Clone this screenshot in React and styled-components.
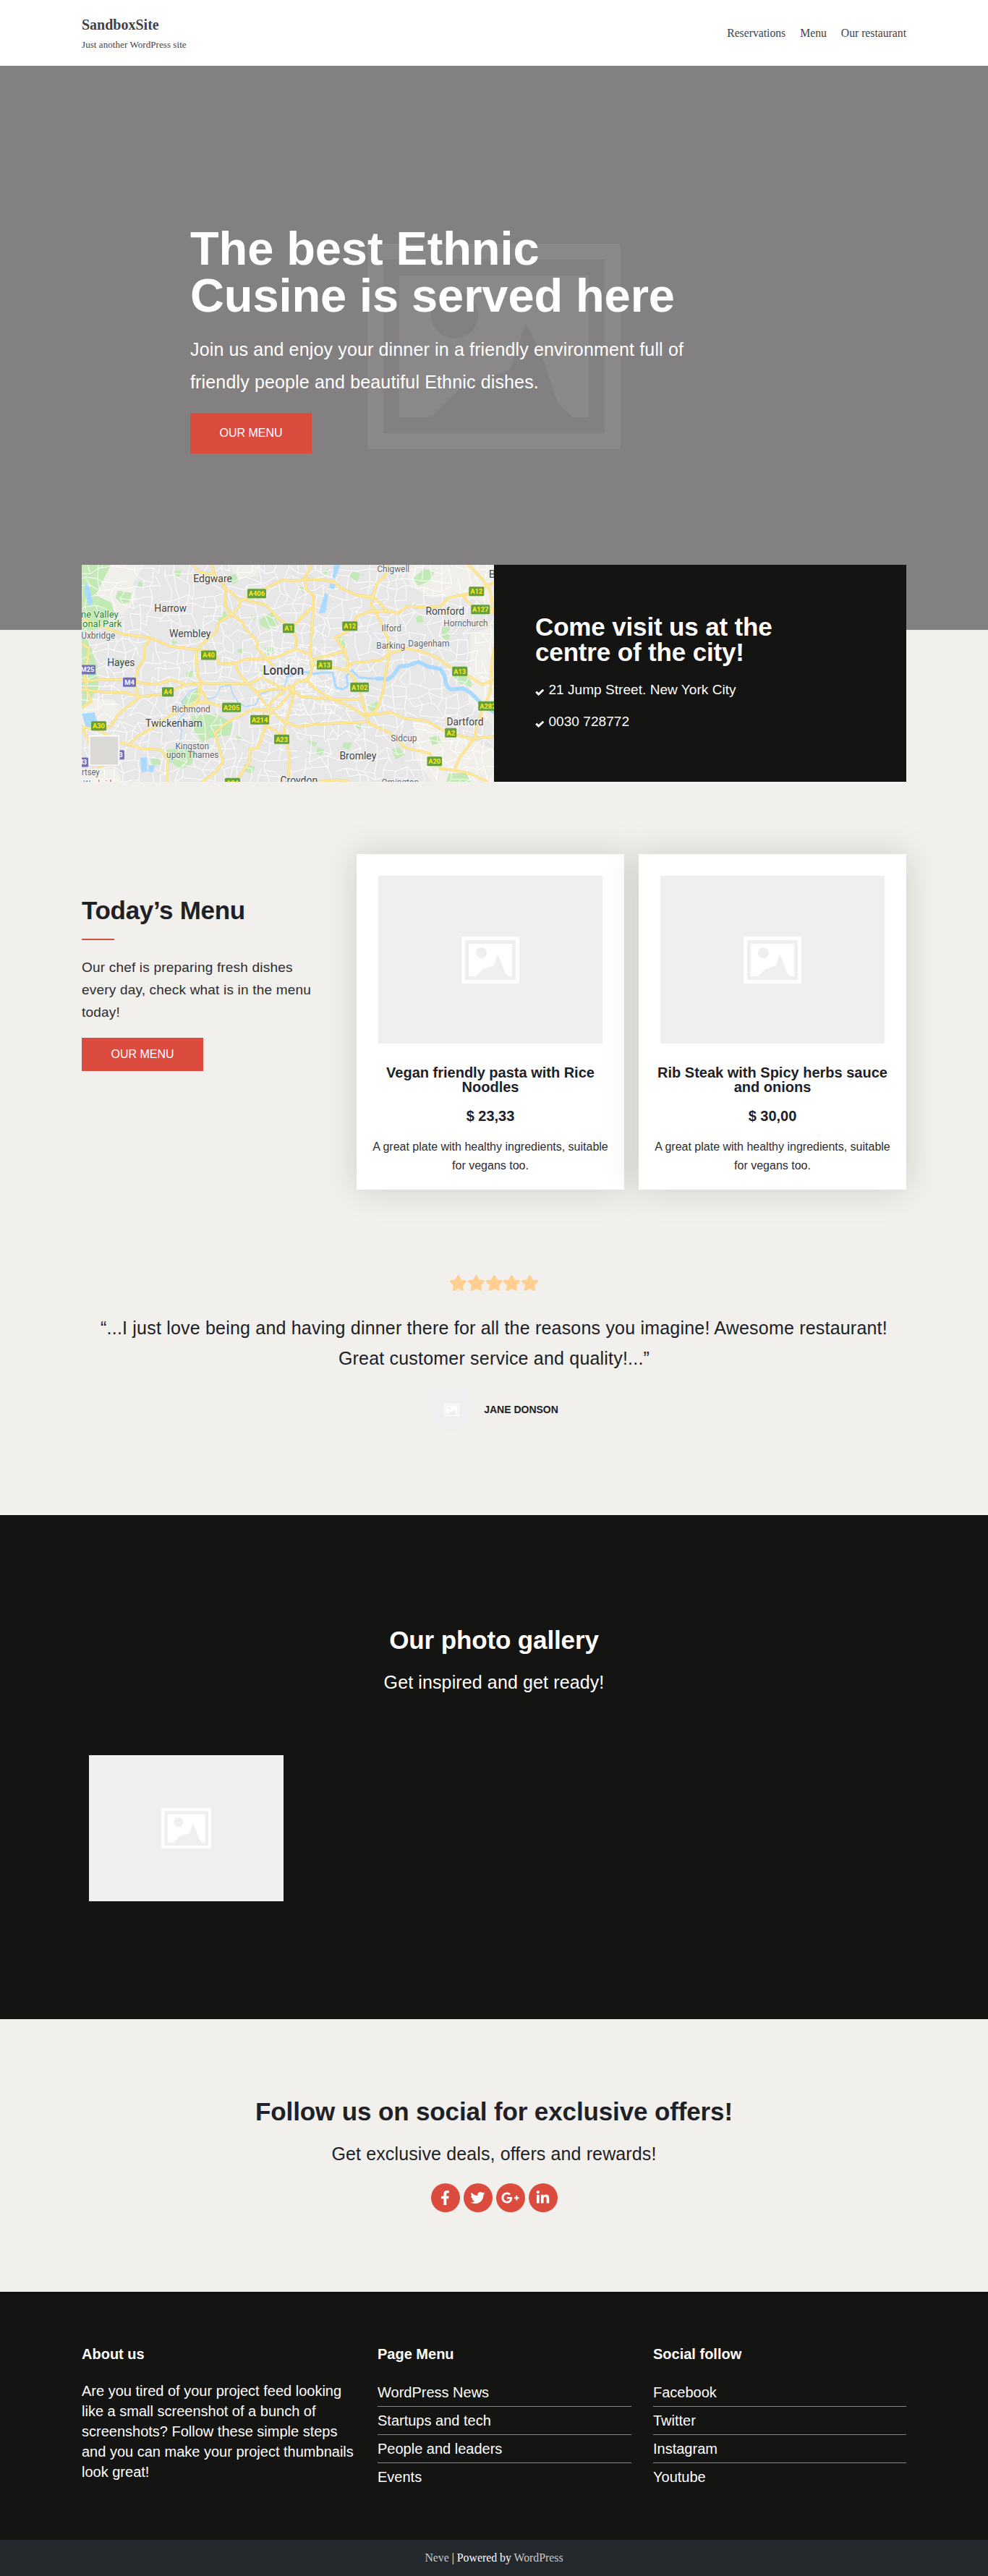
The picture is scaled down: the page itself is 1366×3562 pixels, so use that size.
import React from "react";
import styled, { createGlobalStyle } from "styled-components";
import {
  FaStar,
  FaFacebookF,
  FaTwitter,
  FaGooglePlusG,
  FaLinkedinIn,
} from "react-icons/fa";

const sans = `"Liberation Sans", Arial, sans-serif`;
const serif = `"Liberation Serif", "Times New Roman", serif`;
const c = {
  cream: "#f1f0ec",
  dark: "#141412",
  ink: "#202127",
  red: "#db4c3f",
  grey: "#f0eeef",
};

const Global = createGlobalStyle`
  *, *::before, *::after { box-sizing: border-box; }
  body { margin: 0; background: ${c.cream}; color: ${c.ink}; font-family: ${sans}; }
  h1, h2, h3, p, ul { margin: 0; padding: 0; }
  ul { list-style: none; }
  a { color: inherit; text-decoration: none; }
`;

const Page = styled.div`
  width: 100%;
  overflow: hidden;
`;

const Container = styled.div`
  width: 1140px;
  margin: 0 auto;
`;

/* Header */
const Header = styled.header`
  height: 91px;
  background: #fff;
  color: #404248;
  font-family: ${serif};
`;
const HeaderInner = styled(Container)`
  display: flex;
  justify-content: space-between;
  align-items: center;
  height: 91px;
`;
const Brand = styled.div`
  display: flex;
  flex-direction: column;
  gap: 6px;
  padding-top: 2px;
`;
const SiteTitle = styled.p`
  font-size: 20px;
  font-weight: 700;
  line-height: 24px;
`;
const Tagline = styled.p`
  font-size: 13px;
  line-height: 20px;
  letter-spacing: 0.07px;
`;
const Nav = styled.nav`
  display: flex;
  gap: 20px;
  font-size: 15.7px;
  line-height: 24px;
`;

/* Hero */
const Hero = styled.section`
  height: 780px;
  background: #838081;
  display: grid;
  justify-items: center;
`;
const HeroArt = styled.div`
  grid-area: 1 / 1;
  padding-top: 246px;
  svg { display: block; }
`;
const HeroContent = styled.div`
  grid-area: 1 / 1;
  width: 840px;
  padding-top: 220px;
  display: flex;
  flex-direction: column;
  align-items: flex-start;
  gap: 20px;
  color: #fff;
  z-index: 1;
`;
const HeroTitle = styled.h1`
  font-size: 65px;
  line-height: 65px;
  letter-spacing: -0.1px;
  width: 700px;
`;
const HeroText = styled.p`
  font-size: 25px;
  line-height: 45px;
  letter-spacing: 0.15px;
  width: 700px;
`;
const Button = styled.a`
  display: flex;
  align-items: center;
  justify-content: center;
  width: 168px;
  height: ${(p) => (p.$tall ? 56 : 46)}px;
  background: ${c.red};
  color: #fff;
  font-size: 16px;
  line-height: 26px;
  text-transform: uppercase;
`;

/* Visit */
const Visit = styled(Container)`
  display: flex;
  height: 300px;
  margin-top: -90px;
`;
const MapBox = styled.div`
  width: 570px;
  height: 300px;
  svg { display: block; }
`;
const VisitInfo = styled.div`
  width: 570px;
  padding: 68px 57px 0;
  background: ${c.dark};
  color: #fff;
`;
const VisitTitle = styled.h2`
  font-size: 35px;
  line-height: 35px;
  letter-spacing: -0.15px;
  width: 380px;
  margin-bottom: 20px;
`;
const VisitItem = styled.li`
  display: flex;
  align-items: center;
  gap: 6px;
  height: 30px;
  font-size: 19px;
  line-height: 30px;
  letter-spacing: 0.05px;
  margin-bottom: 14.4px;
  svg { margin-top: 5px; }
`;

/* Menu */
const MenuSection = styled(Container)`
  display: flex;
  gap: 20px;
  padding-top: 100px;
`;
const MenuIntro = styled.div`
  width: 360px;
  padding-top: 60px;
`;
const SectionTitle = styled.h2`
  font-size: 35px;
  line-height: 35px;
  letter-spacing: ${(p) => p.$track || "-0.13px"};
`;
const Rule = styled.div`
  width: 45px;
  height: 2px;
  margin: 22px 0;
  background: ${c.red};
`;
const IntroText = styled.p`
  width: 330px;
  font-size: 19px;
  line-height: 31px;
  letter-spacing: 0.19px;
  margin-bottom: 20px;
  color: #2b2c31;
`;
const Card = styled.article`
  width: 370px;
  height: 464px;
  padding: 30px 20px 20px;
  display: flex;
  flex-direction: column;
  align-items: center;
  text-align: center;
  background: #fff;
  box-shadow: 0 0 46px rgba(20, 20, 12, 0.15);
`;
const Photo = styled.div`
  width: ${(p) => p.$w}px;
  height: ${(p) => p.$h}px;
  display: flex;
  align-items: center;
  justify-content: center;
  background: ${c.grey};
`;
const DishName = styled.h3`
  margin-top: 30px;
  font-size: 20px;
  line-height: 20px;
`;
const Price = styled.p`
  margin: 20px 0;
  font-size: 20px;
  line-height: 20px;
  font-weight: 700;
`;
const DishText = styled.p`
  font-size: 16px;
  line-height: 26px;
  color: #2b2c31;
`;

/* Testimonial */
const Testimonial = styled(Container)`
  height: 450px;
  padding-top: 118px;
  display: flex;
  flex-direction: column;
  align-items: center;
  text-align: center;
`;
const Stars = styled.div`
  display: flex;
  color: #ffce91;
  svg { width: 24.9px; height: 22px; }
`;
const Quote = styled.p`
  margin: 30px 0 20px;
  font-size: 25px;
  line-height: 42px;
  letter-spacing: 0.2px;
`;
const Author = styled.div`
  display: flex;
  align-items: center;
  gap: 15px;
  font-size: 14px;
  font-weight: 700;
  text-transform: uppercase;
`;
const Avatar = styled.div`
  width: 60px;
  height: 60px;
  border-radius: 50%;
  background: ${c.grey};
  display: flex;
  align-items: center;
  justify-content: center;
`;

/* Gallery */
const Gallery = styled.section`
  height: 697px;
  padding-top: 155px;
  background: ${c.dark};
  color: #fff;
`;
const Centered = styled.div`
  text-align: center;
`;
const Lead = styled.p`
  margin-top: 20px;
  font-size: 25px;
  line-height: 42px;
  letter-spacing: 0.12px;
`;
const GalleryGrid = styled(Container)`
  display: flex;
  padding: 80px 10px 0;
`;

/* Social */
const Social = styled.section`
  height: 377px;
  padding-top: 110px;
  display: flex;
  flex-direction: column;
  align-items: center;
`;
const SocialRow = styled.div`
  display: flex;
  gap: 5px;
  margin-top: 20px;
`;
const SocialButton = styled.a`
  width: 40px;
  height: 40px;
  border-radius: 50%;
  background: ${c.red};
  color: #fff;
  display: flex;
  align-items: center;
  justify-content: center;
  svg { width: 25px; height: 20px; }
`;

/* Footer */
const Footer = styled.footer`
  height: 343px;
  padding-top: 76px;
  background: ${c.dark};
  color: #fff;
  font-size: 20px;
`;
const FooterInner = styled(Container)`
  display: grid;
  grid-template-columns: 379px 351px 350px;
  column-gap: 30px;
`;
const FooterTitle = styled.h3`
  font-size: 20px;
  line-height: 20px;
`;
const FooterText = styled.p`
  margin-top: 27px;
  line-height: 28px;
`;
const FooterList = styled.ul`
  margin-top: 24px;
`;
const FooterItem = styled.li`
  height: 39px;
  line-height: 38px;
  border-bottom: 1px solid #858585;
  &:last-child { border-bottom: 0; }
`;
const Credits = styled.div`
  height: 50px;
  background: #24292e;
  color: #fff;
  font-family: ${serif};
  font-size: 15.8px;
  line-height: 50px;
  text-align: center;
  a { color: #c8c9cb; }
`;

function PictureMark({ width, height, color = "#fff", hole = c.grey }) {
  return (
    <svg width={width} height={height} viewBox="0 0 80 65">
      <path fillRule="evenodd" fill={color} d="M0 0H80V65H0ZM5 5V60H75V5Z" />
      <path fill={color} d="M10 10H70V55H65L60 50L55 35L50 25L45 40L30 45L20 55H10Z" />
      <circle cx="27.5" cy="22.5" r="7.5" fill={hole} />
    </svg>
  );
}

function Check() {
  return (
    <svg width="12.5" height="10" viewBox="0 0 12.5 10">
      <path d="M1.2 4.6L4.7 8L11.3 1.8" fill="none" stroke="#fff" strokeWidth="2.9" />
    </svg>
  );
}

/* London map. Shapes are listed on a 1489 x 900 grid and fitted to 570 x 300. */
const mx = (x) => +((x - 34) * 0.3828).toFixed(1);
const my = (y) => +((y - 33) / 3).toFixed(1);
const toPath = (s) =>
  "M" +
  s
    .split(" ")
    .map((p) => p.split(",").map(Number))
    .map(([x, y]) => `${mx(x)} ${my(y)}`)
    .join("L");

const parks = [
  "34,33 140,33 105,110 85,160 140,190 155,240 90,300 34,310",
  "34,330 60,350 90,450 95,540 60,600 34,640",
  "165,140 215,150 205,190 180,195 155,170",
  "150,420 190,425 180,460 150,450",
  "395,600 455,540 460,600 430,625 395,620",
  "430,660 520,650 580,690 570,740 500,750 470,770 440,720",
  "340,800 400,790 450,810 430,860 395,880 350,850",
  "675,260 720,230 745,280 710,300 680,285",
  "695,375 725,370 730,400 700,410",
  "675,470 700,465 705,485 680,488",
  "1230,90 1270,50 1310,60 1290,100 1250,120",
  "1335,290 1365,290 1360,345 1335,340",
  "1370,490 1420,490 1450,530 1440,545 1400,525",
  "1360,900 1420,895 1440,933 1350,933",
  "960,330 985,345 985,390 965,370",
  "850,760 885,770 875,785 855,775",
  "980,770 1010,770 1000,800 975,790",
  "885,790 910,800 900,825 880,815",
  "1065,620 1100,600 1120,625 1080,640",
  "600,380 620,385 612,400 595,395",
  "410,480 440,470 430,500 412,498",
  "520,260 550,225 560,240 530,270",
  "350,340 380,355 365,365",
  "240,100 260,110 250,130 235,120",
  "1010,60 1040,70 1030,100 1000,90",
  "1150,800 1180,790 1200,820 1170,840",
  "560,80 590,70 600,100 580,115",
  "1290,750 1320,740 1335,770 1300,780",
  "640,240 665,245 655,265",
  "280,840 310,830 320,860 290,865",
  "620,860 660,870 650,900 625,890",
  "820,130 840,120 835,150",
  "900,60 925,50 915,80",
  "370,60 395,55 385,85 370,80",
  "1240,250 1260,240 1270,270 1245,275",
  "1020,700 1045,690 1040,720",
  "590,740 615,750 600,770",
];
const fields = [
  "34,33 260,33 220,110 230,180 180,240 34,230",
  "34,590 150,590 180,640 120,700 34,720",
  "1200,33 1523,33 1523,200 1400,160 1300,170 1220,120",
  "1440,320 1523,290 1523,700 1460,640 1430,600",
  "1230,680 1330,700 1523,800 1523,933 1300,933 1240,840",
  "34,880 160,880 180,933 34,933",
  "570,33 680,33 670,80 590,90",
];
const waters = [
  "46,110 60,120 75,190 60,205 45,150",
  "34,650 80,645 95,700 50,710",
  "245,835 270,830 270,890 250,895",
  "275,865 300,865 290,895 275,890",
  "945,33 968,33 950,90 940,85",
  "912,150 925,155 915,230 890,235",
  "930,110 950,115 945,135 928,130",
  "1505,625 1523,620 1523,652",
];
const river = [
  { w: 1.6, p: "390,760 395,720 375,690 410,640 395,600 425,560 460,540 475,570 490,590 520,580 535,540 570,530 580,570 600,605 625,620 660,615 680,570 715,555 765,548 775,500" },
  { w: 3, p: "775,498 830,475 870,485 900,480 940,480 952,540 975,550 995,535 990,495 1010,470 1035,500 1070,505 1120,505" },
  { w: 5.5, p: "1100,505 1140,508 1160,490 1180,455 1215,450 1250,435 1285,455 1330,465 1345,495 1350,530 1365,550 1410,545 1440,565 1470,600 1523,645" },
];
const roads = [
  "505,33 515,80 545,110 555,140 552,200 575,240 600,210 608,183 575,150 545,125",
  "435,33 460,65 505,70 530,90",
  "608,183 660,155 700,130 760,95 800,100 860,92 940,100 970,130 1030,160 1085,165 1100,110 1130,80 1140,33",
  "630,180 700,200 740,250 780,285 800,310 810,345 805,383",
  "575,240 615,270 625,300 665,345 670,380 690,410 725,450",
  "865,33 840,90 845,135 872,160 870,230 860,400 865,440",
  "870,205 830,250 800,285",
  "110,290 180,320 280,335 350,370 450,385 515,395",
  "280,345 262,370 260,420 235,470 225,530 240,580",
  "575,240 530,270 520,310 490,340 450,385 448,440 455,500 470,530",
  "515,395 530,445 590,442 625,425 690,423 740,415 805,383 860,405 870,440 860,490 840,515",
  "34,515 110,510 180,510 260,525 300,530 360,510 410,530 470,522 500,525 640,525 690,500",
  "34,550 110,560 200,565 240,580 330,570 400,535",
  "34,705 100,720 140,700 165,655 240,585",
  "100,720 170,770 205,778 240,740 300,705 350,660 410,625 470,600 540,620 600,630",
  "205,778 250,795 320,800 345,840 345,933",
  "470,933 520,890 545,850 530,790 515,730 555,690 620,650 650,635 740,630 770,590 800,545",
  "590,445 600,480 625,515 665,560 720,550 780,545 820,515 850,515 880,550 940,590 1000,620 1060,660",
  "665,560 690,600 720,640 760,680 815,705 870,695 960,690 1060,685",
  "700,510 760,545 800,545 795,600 770,690 765,740 785,820 780,933",
  "700,640 720,600 780,540 830,580 930,590 1000,590 1050,590",
  "690,650 700,700 670,790 640,800 640,850 610,900 590,933",
  "720,640 700,700 760,740",
  "860,445 940,460 990,470 1010,490 1030,530 1050,600 1060,650 1090,655",
  "870,425 940,405 985,390 950,335 1000,305 1030,245 1080,225 1150,225 1175,235 1210,205 1280,210 1330,205 1360,170 1400,160 1440,150 1500,120 1523,105",
  "1085,165 1080,200 1110,260 1140,340 1145,400 1130,500 1120,570 1100,630 1065,665 1070,690 1130,720 1170,750 1200,790 1290,815 1330,880 1380,885 1440,900 1500,933",
  "990,470 1010,440 1110,430 1150,400 1210,380 1270,395 1320,420 1370,460 1440,500 1480,530 1523,510",
  "1030,160 1090,170 1110,190 1140,230",
  "1090,655 1150,645 1200,670 1280,680 1340,720 1440,755 1523,745",
  "1410,160 1440,200 1523,230",
  "1430,33 1480,90 1510,140 1520,230",
  "1523,380 1515,450 1510,560 1480,640 1460,700 1455,750 1400,830 1380,885",
  "34,255 90,285 110,290",
  "34,360 60,380 55,430 45,490 50,550 70,600 34,625",
  "34,700 60,770 90,870 150,860",
  "455,540 460,580 440,610 490,600 460,540",
  "985,390 995,440 990,470",
  "880,933 960,925 1000,933",
];
/* name, left, right, baseline, font size */
const towns = [
  ["Edgware", 437, 577, 105, 15],
  ["Harrow", 296, 413, 228, 15],
  ["Wembley", 350, 500, 333, 15],
  ["Hayes", 126, 226, 453, 15],
  ["Uxbridge", 32, 155, 339, 12.3],
  ["London", 688, 836, 489, 17.5],
  ["Chigwell", 1101, 1218, 63, 12.3],
  ["Romford", 1276, 1416, 240, 15],
  ["Hornchurch", 1341, 1501, 288, 12.3],
  ["Ilford", 1117, 1188, 309, 12.3],
  ["Barking", 1098, 1202, 381, 12.3],
  ["Dagenham", 1213, 1362, 373, 12.3],
  ["Richmond", 359, 498, 645, 12.3],
  ["Twickenham", 264, 470, 705, 15],
  ["Kingston", 372, 494, 798, 12.3],
  ["upon Thames", 340, 529, 834, 12.3],
  ["Dartford", 1352, 1485, 699, 15],
  ["Sidcup", 1150, 1245, 765, 12.3],
  ["Bromley", 965, 1098, 840, 15],
  ["Croydon", 751, 886, 942, 15],
  ["Orpington", 1117, 1251, 948, 12.3],
  ["Weybridge", 40, 172, 954, 12.3],
  ["rtsey", 34, 98, 906, 12.3],
  ["B", 1504, 1529, 86, 15],
];
const shields = [
  ["A406", 632, 700, 152],
  ["A1", 760, 802, 296],
  ["A12", 975, 1030, 287],
  ["A12", 1432, 1487, 143],
  ["A127", 1440, 1508, 218],
  ["A40", 465, 520, 408],
  ["A13", 883, 938, 448],
  ["A13", 1372, 1427, 475],
  ["A102", 1004, 1071, 541],
  ["A4", 324, 366, 560],
  ["A205", 541, 609, 625],
  ["A214", 643, 711, 676],
  ["A30", 68, 123, 701],
  ["A23", 729, 784, 757],
  ["A2", 1346, 1388, 730],
  ["A20", 1281, 1335, 848],
  ["A24", 551, 606, 937],
  ["A282", 1466, 1535, 619],
  ["M25", 26, 84, 468, 1],
  ["M4", 183, 230, 520, 1],
  ["M3", 140, 188, 821, 1],
  ["M3", 12, 58, 852, 1],
];

/* Street mesh: a jittered lattice, finer towards the centre. */
function buildStreets() {
  let seed = 7;
  const rnd = () => {
    seed = (seed * 16807) % 2147483647;
    return seed / 2147483647;
  };
  const mesh = (x0, y0, x1, y1, step, keep) => {
    const cols = Math.ceil((x1 - x0) / step) + 1;
    const rows = Math.ceil((y1 - y0) / step) + 1;
    const pts = [];
    for (let r = 0; r < rows; r++)
      for (let k = 0; k < cols; k++)
        pts.push([
          x0 + k * step + (rnd() - 0.5) * step * 0.95,
          y0 + r * step + (rnd() - 0.5) * step * 0.95,
        ]);
    let d = "";
    const seg = (a, b) => {
      d += `M${a[0].toFixed(1)} ${a[1].toFixed(1)}L${b[0].toFixed(1)} ${b[1].toFixed(1)}`;
    };
    for (let r = 0; r < rows; r++)
      for (let k = 0; k < cols; k++) {
        const i = r * cols + k;
        if (k < cols - 1 && rnd() < keep) seg(pts[i], pts[i + 1]);
        if (r < rows - 1 && rnd() < keep) seg(pts[i], pts[i + cols]);
      }
    return d;
  };
  return mesh(-5, -5, 580, 310, 12.5, 0.72) + mesh(240, 115, 350, 200, 7, 0.55);
}
const streets = buildStreets();

function LondonMap() {
  return (
    <svg width="570" height="300" viewBox="0 0 570 300" fontFamily="Roboto, sans-serif">
      <rect width="570" height="300" fill="#e7e7e7" />
      {fields.map((p) => <path key={p} d={toPath(p) + "Z"} fill="#f0efe9" />)}
      {parks.map((p) => <path key={p} d={toPath(p) + "Z"} fill="#c3e9b6" />)}
      <path d={streets} fill="none" stroke="#fff" strokeWidth="1" />
      {waters.map((p) => <path key={p} d={toPath(p) + "Z"} fill="#aadaff" />)}
      <g fill="none" strokeLinejoin="round" strokeLinecap="round">
        {river.map((r) => <path key={r.p} d={toPath(r.p)} stroke="#aadaff" strokeWidth={r.w} />)}
        {roads.map((p) => <path key={p} d={toPath(p)} stroke="#f9d673" strokeWidth="3.4" />)}
        {roads.map((p) => <path key={p} d={toPath(p)} stroke="#ffeb9d" strokeWidth="2" />)}
      </g>
      {shields.map(([t, x0, x1, y, motorway]) => (
        <g key={t + x0}>
          <rect x={mx(x0)} y={my(y) - 6.5} width={(x1 - x0) * 0.3828} height="13" rx="1.5" fill={motorway ? "#7070c4" : "#669f3c"} />
          <text x={mx((x0 + x1) / 2)} y={my(y) + 3.2} fontSize="9.3" fontWeight="700" textAnchor="middle" fill={motorway ? "#fff" : "#ffe81a"}>{t}</text>
        </g>
      ))}
      {towns.map(([t, x0, x1, y, size]) => (
        <text key={t} x={mx(x0)} y={my(y)} fontSize={size} textLength={(x1 - x0) * 0.3828} lengthAdjust="spacingAndGlyphs" fontWeight={size > 17 ? 500 : 400} fill={size > 13 ? "#3f4246" : "#5f6368"} stroke="#fff" strokeOpacity="0.7" strokeWidth="1.6" paintOrder="stroke">{t}</text>
      ))}
      <g fontSize="13" fill="#26862f" stroke="#fff" strokeOpacity="0.7" strokeWidth="1.6" paintOrder="stroke">
        <text x="-1" y={my(252)}>ne Valley</text>
        <text x="1" y={my(290)}>onal Park</text>
      </g>
      <rect x="9.5" y="236.5" width="43" height="42.5" rx="2" fill="#000" opacity="0.18" />
      <rect x="10.5" y="236.5" width="41" height="41" rx="1.5" fill="#dad9d6" stroke="#fff" strokeWidth="2" />
    </svg>
  );
}

const dishes = [
  { name: "Vegan friendly pasta with Rice Noodles", price: "$ 23,33" },
  { name: "Rib Steak with Spicy herbs sauce and onions", price: "$ 30,00" },
];
const footerLists = [
  { title: "Page Menu", items: ["WordPress News", "Startups and tech", "People and leaders", "Events"] },
  { title: "Social follow", items: ["Facebook", "Twitter", "Instagram", "Youtube"] },
];

export default function App() {
  return (
    <Page>
      <Global />
      <Header>
        <HeaderInner>
          <Brand>
            <SiteTitle>SandboxSite</SiteTitle>
            <Tagline>Just another WordPress site</Tagline>
          </Brand>
          <Nav>
            <a>Reservations</a>
            <a>Menu</a>
            <a>Our restaurant</a>
          </Nav>
        </HeaderInner>
      </Header>

      <Hero>
        <HeroArt>
          <PictureMark width={350} height={284} color="#8a8888" hole="#838081" />
        </HeroArt>
        <HeroContent>
          <HeroTitle>The best Ethnic Cusine is served here</HeroTitle>
          <HeroText>
            Join us and enjoy your dinner in a friendly environment full of friendly people and beautiful Ethnic dishes.
          </HeroText>
          <Button $tall>Our menu</Button>
        </HeroContent>
      </Hero>

      <Visit>
        <MapBox>
          <LondonMap />
        </MapBox>
        <VisitInfo>
          <VisitTitle>Come visit us at the centre of the city!</VisitTitle>
          <ul>
            <VisitItem><Check />21 Jump Street. New York City</VisitItem>
            <VisitItem><Check />0030 728772</VisitItem>
          </ul>
        </VisitInfo>
      </Visit>

      <MenuSection>
        <MenuIntro>
          <SectionTitle $track="-0.3px">Today’s Menu</SectionTitle>
          <Rule />
          <IntroText>Our chef is preparing fresh dishes every day, check what is in the menu today!</IntroText>
          <Button>Our menu</Button>
        </MenuIntro>
        {dishes.map((d) => (
          <Card key={d.name}>
            <Photo $w={310} $h={232}><PictureMark width={80} height={65} /></Photo>
            <DishName>{d.name}</DishName>
            <Price>{d.price}</Price>
            <DishText>A great plate with healthy ingredients, suitable for vegans too.</DishText>
          </Card>
        ))}
      </MenuSection>

      <Testimonial>
        <Stars>{[0, 1, 2, 3, 4].map((i) => <FaStar key={i} />)}</Stars>
        <Quote>
          “...I just love being and having dinner there for all the reasons you imagine! Awesome restaurant!
          <br />
          Great customer service and quality!...”
        </Quote>
        <Author>
          <Avatar><PictureMark width={21} height={17} /></Avatar>
          Jane Donson
        </Author>
      </Testimonial>

      <Gallery>
        <Centered>
          <SectionTitle>Our photo gallery</SectionTitle>
          <Lead>Get inspired and get ready!</Lead>
        </Centered>
        <GalleryGrid>
          <Photo $w={269} $h={202}><PictureMark width={69.4} height={56.4} /></Photo>
        </GalleryGrid>
      </Gallery>

      <Social>
        <SectionTitle>Follow us on social for exclusive offers!</SectionTitle>
        <Lead>Get exclusive deals, offers and rewards!</Lead>
        <SocialRow>
          <SocialButton><FaFacebookF /></SocialButton>
          <SocialButton><FaTwitter /></SocialButton>
          <SocialButton><FaGooglePlusG /></SocialButton>
          <SocialButton><FaLinkedinIn /></SocialButton>
        </SocialRow>
      </Social>

      <Footer>
        <FooterInner>
          <div>
            <FooterTitle>About us</FooterTitle>
            <FooterText>
              Are you tired of your project feed looking like a small screenshot of a bunch of screenshots? Follow these simple steps and you can make your project thumbnails look great!
            </FooterText>
          </div>
          {footerLists.map((l) => (
            <div key={l.title}>
              <FooterTitle>{l.title}</FooterTitle>
              <FooterList>
                {l.items.map((i) => <FooterItem key={i}>{i}</FooterItem>)}
              </FooterList>
            </div>
          ))}
        </FooterInner>
      </Footer>
      <Credits>
        <a>Neve</a> | Powered by <a>WordPress</a>
      </Credits>
    </Page>
  );
}
